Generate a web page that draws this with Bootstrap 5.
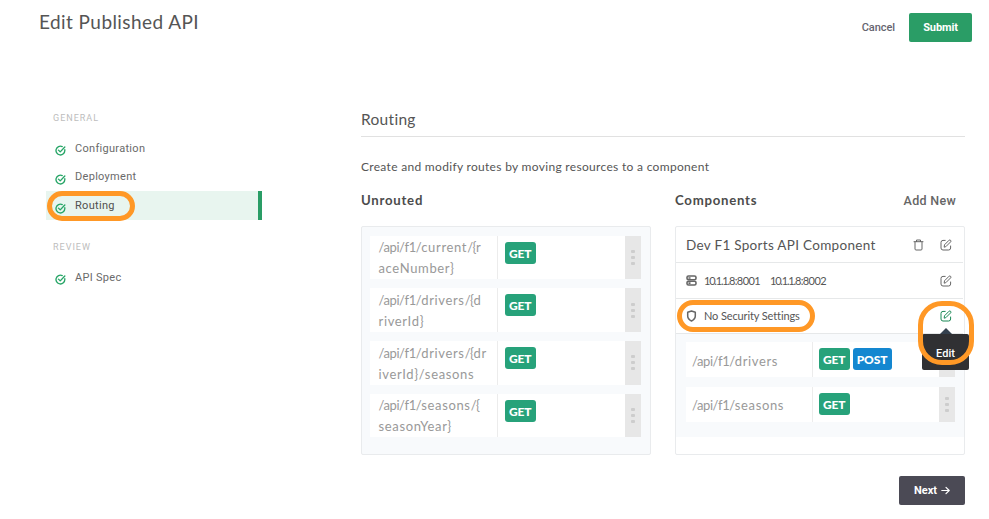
<!DOCTYPE html>
<html lang="en">
<head>
<meta charset="utf-8">
<meta name="viewport" content="width=device-width, initial-scale=1">
<title>Edit Published API</title>
<link href="https://cdn.jsdelivr.net/npm/bootstrap@5.3.0/dist/css/bootstrap.min.css" rel="stylesheet">
<style>
body{font-family:Lato,"Open Sans",sans-serif;color:#555;background:#fff;font-size:13px;line-height:20px;width:989px;height:519px;overflow:hidden}
svg{display:block;fill:none;stroke:currentColor;stroke-linecap:round;stroke-linejoin:round;flex:none}
.top-bar{height:90px;padding:0 17px 0 39px}
.page-title{font-size:19px;line-height:24px;margin:10px 0 0;letter-spacing:.43px;font-weight:400}
.top-actions{margin-top:13px;gap:14px}
.act{font:500 11px/29px Roboto,sans-serif;height:29px;padding:0;border:0;border-radius:2px}
.act-cancel{color:#66656f;letter-spacing:-.05px}
.act-submit{width:63px;background:#2a9d66;color:#fff;font-weight:700;letter-spacing:-.1px}
.act-next{width:66px;background:#4b4a55;color:#fff;font-weight:700;gap:4px}
.act-next svg{stroke-width:1.2}
.side{width:216px;margin-left:46px;font-family:Roboto,sans-serif;font-size:11px;letter-spacing:.3px;color:#6a6a6a}
.side-label{font-size:9px;letter-spacing:1px;color:#bdbdbd;line-height:12px;padding-left:7px}
.step{height:28.7px;padding-left:9px;gap:9px;position:relative;border-right:4px solid transparent}
.step svg{color:#27a567;margin-top:5px}
.step span{line-height:28px}
.step .low{padding-top:2px}
.step-on{background:#e8f5ef;border-right-color:#2a9d66;color:#505050}
.ring{position:absolute;border:5px solid #ff9826;pointer-events:none}
.ring-step{left:1px;top:0;width:88px;height:30px;border-radius:15px}
.ring-sec{left:1px;top:1px;width:138px;height:32px;border-radius:16px}
.ring-edit{left:-22px;top:-9px;width:56px;height:64px;border-radius:24px;z-index:3}
.content-area{width:604px;margin-left:99px}
.sec-title{font-size:15.5px;line-height:20px;letter-spacing:.3px;margin:0;height:28px;border-bottom:1px solid #e1e1e1;font-weight:400}
.intro{font-size:12px;letter-spacing:.31px;margin:20px 0 14px}
.col-head{font-size:13.2px;font-weight:700;letter-spacing:.75px;height:35px;line-height:19px;color:#4c4c4c}
.add-new{font-weight:500;font-size:12.5px;letter-spacing:.3px;font-family:Roboto,sans-serif;color:#666;margin-right:9px}
.board{width:290px;height:229px;border:1px solid #e9ebed;border-radius:2px}
.board-left{background:#f8fafc;padding:8.5px 9px 0 8px}
.board-left .route{margin-bottom:9.3px}
.route{height:43.5px;background:#fff;color:#999;font-size:13px;line-height:21px;letter-spacing:.65px}
.route-path{width:128px;padding:1.5px 0 0 8.5px;white-space:nowrap;border-right:1px solid #ececec}
.tight{letter-spacing:-.4px}
.brace{letter-spacing:-.5px}
.verbs{padding:6px 0 0 7px;gap:3px}
.verb{height:22px;border-radius:3px;background:#27a27a;color:#fff;font-weight:900;font-size:12px;line-height:23px;letter-spacing:-.1px;text-align:center;width:30.5px}
.verb-post{background:#1487d0;width:39px}
.grip{width:16px;background:#e7e7e7;gap:3px}
.grip i{width:4px;height:3px;background:#cdcdcd;border-radius:1px}
.crow{height:36px;border-bottom:1px solid #e6e8e9;padding:0 11px 0 10px;position:relative;margin:0 1px 0 0}
.crow-last{height:35px}
.cname{font-size:13.5px;letter-spacing:.3px}
.cinfo{font-size:11px;margin-left:7px;letter-spacing:-.12px}
.ip{letter-spacing:-.6px;margin-right:-1px}
.ip-head{letter-spacing:-1.2px}
.ico{color:#666}
.cbody{background:#f8fafc;height:103px;padding:8px 9px 0 10px}
.cbody .route{height:35px;margin-bottom:9.5px;line-height:36px}
.cbody .route-path{width:127px;padding:.5px 0 0 6px}
.cbody .verbs{padding-left:6px}
.tip{position:absolute;left:-18px;top:24px;width:47px;height:36px;background:#303033;color:#fff;border-radius:2px;font:500 11px/39px Roboto,sans-serif;text-align:center;z-index:2}
.tip::before{content:"";position:absolute;left:18px;top:-6px;border:6px solid transparent;border-top:0;border-bottom-color:#34404e}
</style>
<script src="https://cdn.jsdelivr.net/npm/bootstrap@5.3.0/dist/js/bootstrap.bundle.min.js"></script>
</head>
<body>
<svg width="0" height="0" class="position-absolute">
  <symbol id="check" viewBox="0 0 12 12"><path d="M10.7 5.2v.8a4.8 4.8 0 1 1-2.8-4.3M3.8 5.6l1.9 1.9 5-5.3"/></symbol>
  <symbol id="edit" viewBox="0 0 12 12"><path d="M5.2 1.4H3A2 2 0 0 0 1 3.400V9a2 2 0 0 0 2 2h5.600a2 2 0 0 0 2-2V7M4.200 7.800l.3-2 4.600-4.600q.7-.6 1.500.1t.1 1.500L6.100 7.400z"/></symbol>
</svg>
<header class="top-bar d-flex justify-content-between align-items-start">
  <h1 class="page-title">Edit Published API</h1>
  <div class="top-actions d-flex">
    <button class="act act-cancel bg-transparent">Cancel</button>
    <button class="act act-submit">Submit</button>
  </div>
</header>
<main class="d-flex align-items-start">
  <nav class="side">
    <div class="side-label" style="margin:22px 0 10px">GENERAL</div>
    <div class="step d-flex align-items-center"><svg width="11" height="11" stroke-width="1.5"><use href="#check"/></svg><span class="low">Configuration</span></div>
    <div class="step d-flex align-items-center"><svg width="11" height="11" stroke-width="1.5"><use href="#check"/></svg><span>Deployment</span></div>
    <div class="step step-on d-flex align-items-center"><svg width="11" height="11" stroke-width="1.5"><use href="#check"/></svg><span>Routing</span><div class="ring ring-step"></div></div>
    <div class="side-label" style="margin:21px 0 10px">REVIEW</div>
    <div class="step d-flex align-items-center"><svg width="11" height="11" stroke-width="1.5"><use href="#check"/></svg><span class="low">API Spec</span></div>
  </nav>
  <section class="content-area">
    <h2 class="sec-title" style="margin-top:19px">Routing</h2>
    <p class="intro">Create and modify routes by moving resources to a component</p>
    <div class="d-flex justify-content-between">
      <div>
        <div class="col-head">Unrouted</div>
        <div class="board board-left">
          <div class="route d-flex"><div class="route-path"><span class="tight">/api/f1/</span>current<span class="brace">/{</span>r<br>aceNumber}</div><div class="verbs d-flex flex-fill"><span class="verb">GET</span></div><div class="grip d-flex flex-column align-items-center justify-content-center"><i></i><i></i><i></i></div></div>
          <div class="route d-flex"><div class="route-path"><span class="tight">/api/f1/</span>drivers<span class="brace">/{</span>d<br>riverId}</div><div class="verbs d-flex flex-fill"><span class="verb">GET</span></div><div class="grip d-flex flex-column align-items-center justify-content-center"><i></i><i></i><i></i></div></div>
          <div class="route d-flex"><div class="route-path"><span class="tight">/api/f1/</span>drivers<span class="brace">/{</span>dr<br>iverId}/seasons</div><div class="verbs d-flex flex-fill"><span class="verb">GET</span></div><div class="grip d-flex flex-column align-items-center justify-content-center"><i></i><i></i><i></i></div></div>
          <div class="route d-flex"><div class="route-path"><span class="tight">/api/f1/</span>seasons<span class="brace">/{</span><br>seasonYear}</div><div class="verbs d-flex flex-fill"><span class="verb">GET</span></div><div class="grip d-flex flex-column align-items-center justify-content-center"><i></i><i></i><i></i></div></div>
        </div>
      </div>
      <div>
        <div class="col-head d-flex justify-content-between"><span>Components</span><span class="add-new">Add New</span></div>
        <div class="board">
          <div class="crow d-flex align-items-center">
            <span class="cname me-auto">Dev F1 Sports API Component</span>
            <svg class="ico me-3" width="11" height="12" viewBox="0 0 11 12"><path d="M1 2.700h9M3.500 2.500V1h4v1.500M2 3v7q0 1 1 1h5q1 0 1-1V3"/></svg>
            <svg class="ico" width="12" height="12"><use href="#edit"/></svg>
          </div>
          <div class="crow d-flex align-items-center">
            <svg class="ico" width="11" height="11" viewBox="0 0 11 11" stroke-width="1.600"><rect x="1" y="1" width="9" height="3.800" rx="1.500"/><rect x="1" y="6.200" width="9" height="3.800" rx="1.500"/><path d="M3 3h1M3 8.100h1"/></svg>
            <span class="cinfo ip"><span class="ip-head">10.1.1.</span>8:8001</span><span class="cinfo ip me-auto ps-1"><span class="ip-head">10.1.1.</span>8:8002</span>
            <svg class="ico" width="12" height="12"><use href="#edit"/></svg>
          </div>
          <div class="crow crow-last d-flex align-items-center">
            <svg class="ico" width="11" height="12" viewBox="0 0 11 12" stroke-width="1.500"><path d="M5.500 1 9.300 2.200V6q0 3-3.800 5Q1.700 9 1.700 6V2.200z"/></svg>
            <span class="cinfo me-auto">No Security Settings</span>
            <div class="position-relative text-success"><svg width="12" height="12"><use href="#edit"/></svg>
              <div class="tip">Edit</div><div class="ring ring-edit"></div></div>
            <div class="ring ring-sec"></div>
          </div>
          <div class="cbody">
            <div class="route d-flex"><div class="route-path"><span class="tight">/api/f1/</span>drivers</div><div class="verbs d-flex flex-fill"><span class="verb">GET</span><span class="verb verb-post">POST</span></div><div class="grip d-flex flex-column align-items-center justify-content-center"><i></i><i></i><i></i></div></div>
            <div class="route d-flex"><div class="route-path"><span class="tight">/api/f1/</span>seasons</div><div class="verbs d-flex flex-fill"><span class="verb">GET</span></div><div class="grip d-flex flex-column align-items-center justify-content-center"><i></i><i></i><i></i></div></div>
          </div>
        </div>
      </div>
    </div>
    <div class="d-flex justify-content-end" style="margin-top:21px">
      <button class="act act-next d-flex align-items-center justify-content-center">Next <svg width="9" height="9" viewBox="0 0 9 9"><path d="M.8 4.500h7.400M5 1.300l3.200 3.200L5 7.700"/></svg></button>
    </div>
  </section>
</main>
</body>
</html>
